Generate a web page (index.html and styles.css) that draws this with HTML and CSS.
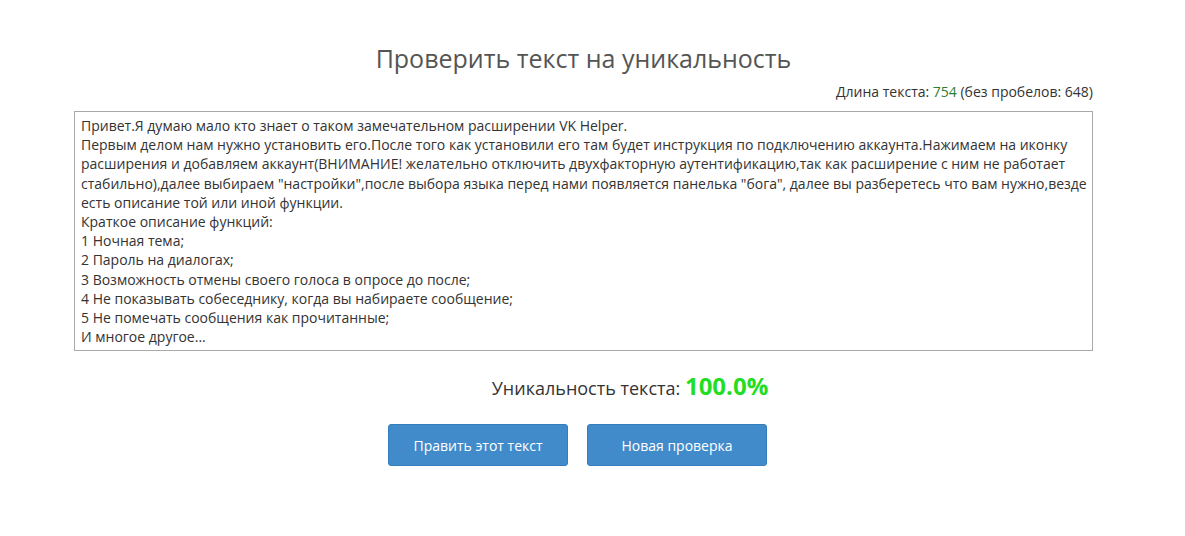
FILE: index.html
```html
<!DOCTYPE html>
<html lang="ru">
<head>
<meta charset="utf-8">
<link rel="stylesheet" href="styles.css">
</head>
<body>
<div class="page">
  <div class="container">
    <h1 class="title">Проверить текст на уникальность</h1>
    <div class="length">Длина текста: <span class="num">754</span> (без пробелов: 648)</div>
    <div class="textbox">Привет.Я думаю мало кто знает о таком замечательном расширении VK Helper.
Первым делом нам нужно установить его.После того как установили его там будет инструкция по подключению аккаунта.Нажимаем на иконку расширения и добавляем аккаунт(ВНИМАНИЕ! желательно отключить двухфакторную аутентификацию,так как расширение с ним не работает стабильно),далее выбираем "настройки",после выбора языка перед нами появляется панелька "бога", далее вы разберетесь что вам нужно,везде есть описание той или иной функции.
Краткое описание функций:
1 Ночная тема;
2 Пароль на диалогах;
3 Возможность отмены своего голоса в опросе до после;
4 Не показывать собеседнику, когда вы набираете сообщение;
5 Не помечать сообщения как прочитанные;
И многое другое...</div>
    <div class="result">Уникальность текста: <span class="percent">100.0%</span></div>
    <div class="actions">
      <button class="btn">Править этот текст</button>
      <button class="btn">Новая проверка</button>
    </div>
  </div>
</div>
</body>
</html>
```
FILE: styles.css
```css
html, body {
  margin: 0;
  padding: 0;
  background: #fff;
}
body {
  font-family: "Open Sans", "DejaVu Sans", sans-serif;
  color: #333;
}
.page {
  width: 1167px;
}
.container {
  width: 1019px;
  margin: 0 auto;
  padding-top: 40px;
}
.title {
  margin: 0;
  font-size: 25px;
  font-weight: 400;
  color: #555;
  text-align: center;
  line-height: 36px;
}
.length {
  text-align: right;
  font-size: 14px;
  line-height: 18px;
  margin-top: 7px;
  color: #333;
}
.length .num {
  color: #2e7d32;
}
.textbox {
  margin-top: 10px;
  border: 1px solid #aaa;
  padding: 4px 3px 4px 6px;
  font-size: 14px;
  line-height: 19.2px;
  white-space: pre-wrap;
  height: 230px;
  overflow: hidden;
  color: #333;
}
.result {
  text-align: center;
  font-size: 18px;
  margin-top: 22px;
  height: 30px;
  line-height: 30px;
  padding-left: 93px;
}
.percent {
  color: #22dd22;
  font-weight: 700;
  font-size: 24px;
  line-height: 1;
}
.actions {
  display: flex;
  justify-content: center;
  gap: 19px;
  margin-top: 21px;
  padding-right: 12px;
}
.btn {
  width: 180px;
  height: 42px;
  background: #428bca;
  border: 1px solid #357ebd;
  border-radius: 3px;
  color: #fff;
  font-family: "Open Sans", sans-serif;
  font-size: 14px;
  padding: 0;
}
```
